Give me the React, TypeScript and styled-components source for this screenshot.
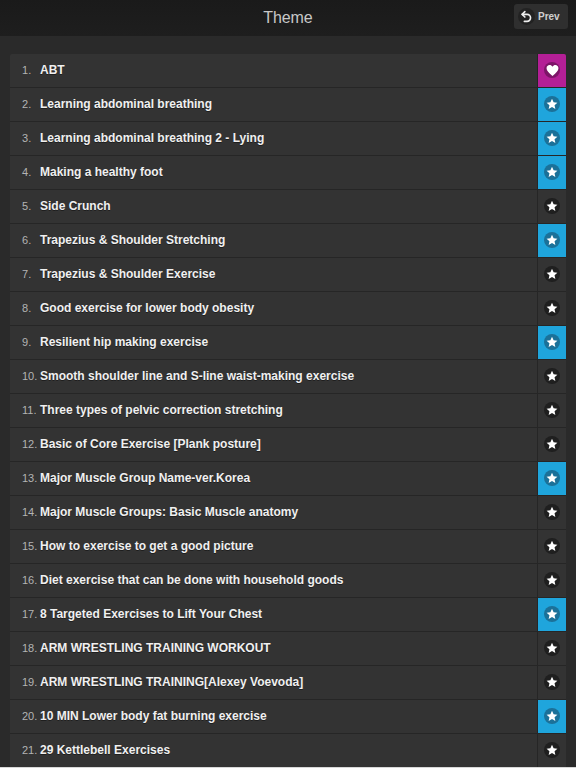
import styled, { createGlobalStyle } from 'styled-components'

const GlobalStyle = createGlobalStyle`
  html, body {
    margin: 0;
    padding: 0;
    height: 768px;
    overflow: hidden;
    background: #d8d8d8;
    font-family: "Liberation Sans", Arial, sans-serif;
  }
`

const Page = styled.div`
  width: 576px;
  height: 767px;
  overflow: hidden;
  display: flex;
  flex-direction: column;
  background: #2a2a2a;
`

const Header = styled.header`
  height: 36px;
  flex: none;
  display: flex;
  align-items: center;
  justify-content: space-between;
  padding: 0 8px 3px 10px;
  box-sizing: border-box;
  background: linear-gradient(#1a1a1a, #1e1e1e);
`

const Spacer = styled.div`
  width: 52px;
`

const Title = styled.h1`
  margin: 3px 0 0;
  font-size: 16px;
  font-weight: 400;
  letter-spacing: -0.1px;
  color: #c8c8c8;
`

const PrevButton = styled.button`
  width: 54px;
  height: 25px;
  padding: 0 0 0 4px;
  display: flex;
  align-items: center;
  gap: 3px;
  border: 0;
  border-radius: 3px;
  background: #2f2f2f;
  color: #cfcfcf;
  font: bold 10px "Liberation Sans", Arial, sans-serif;
`

const PrevIcon = styled.span`
  width: 17px;
  height: 17px;
  border-radius: 50%;
  background: #222;
  display: flex;
  align-items: center;
  justify-content: center;
`

const List = styled.ol`
  list-style: none;
  margin: 18px 10px 0;
  padding: 0;
  border-radius: 2px 2px 0 0;
  overflow: hidden;
  flex: none;
`

const Row = styled.li`
  height: 34px;
  box-sizing: border-box;
  display: flex;
  align-items: stretch;
  background: #333;
  border-bottom: 1px solid #262626;
`

const Num = styled.span`
  width: 30px;
  padding: 0 0 2px 12px;
  box-sizing: border-box;
  flex: none;
  display: flex;
  align-items: center;
  font-size: 11px;
  color: #b4b4b4;
`

const Name = styled.span`
  flex: 1;
  display: flex;
  align-items: center;
  padding-bottom: 2px;
  font-size: 12px;
  font-weight: 700;
  color: #f0f0f0;
  text-shadow: 0 1px 0 #1e1e1e;
`

const Cell = styled.span<{ $kind: 'heart' | 'on' | 'off' }>`
  width: 29px;
  flex: none;
  display: flex;
  align-items: center;
  justify-content: center;
  padding-bottom: 1px;
  border-left: 1px solid #262626;
  box-sizing: border-box;
  background: ${p => (p.$kind === 'heart' ? '#b41f96' : p.$kind === 'on' ? '#1fa5dc' : '#333')};
`

const Badge = styled.span<{ $kind: 'heart' | 'on' | 'off' }>`
  width: 16px;
  height: 16px;
  border-radius: 50%;
  display: flex;
  align-items: center;
  justify-content: center;
  background: ${p => (p.$kind === 'heart' ? '#7d1568' : p.$kind === 'on' ? '#1b7199' : '#1f1f1f')};
`

const items: [string, 'heart' | 'on' | 'off'][] = [
  ['ABT', 'heart'],
  ['Learning abdominal breathing', 'on'],
  ['Learning abdominal breathing 2 - Lying', 'on'],
  ['Making a healthy foot', 'on'],
  ['Side Crunch', 'off'],
  ['Trapezius & Shoulder Stretching', 'on'],
  ['Trapezius & Shoulder Exercise', 'off'],
  ['Good exercise for lower body obesity', 'off'],
  ['Resilient hip making exercise', 'on'],
  ['Smooth shoulder line and S-line waist-making exercise', 'off'],
  ['Three types of pelvic correction stretching', 'off'],
  ['Basic of Core Exercise [Plank posture]', 'off'],
  ['Major Muscle Group Name-ver.Korea', 'on'],
  ['Major Muscle Groups: Basic Muscle anatomy', 'off'],
  ['How to exercise to get a good picture', 'off'],
  ['Diet exercise that can be done with household goods', 'off'],
  ['8 Targeted Exercises to Lift Your Chest', 'on'],
  ['ARM WRESTLING TRAINING WORKOUT', 'off'],
  ['ARM WRESTLING TRAINING[Alexey Voevoda]', 'off'],
  ['10 MIN Lower body fat burning exercise', 'on'],
  ['29 Kettlebell Exercises', 'off'],
]

const Star = () => (
  <svg width="12" height="12" viewBox="0 0 24 24" fill="#fff">
    <path d="M12 1.5l3.2 7 7.6.8-5.7 5.1 1.6 7.5L12 18.1l-6.7 3.8 1.6-7.5L1.2 9.3l7.6-.8z" />
  </svg>
)

const Heart = () => (
  <svg width="13" height="13" viewBox="0 0 24 24" fill="#fff">
    <path d="M12 22C5 16 1 12.5 1 7.8 1 4.4 3.6 2 6.7 2c2.1 0 4.1 1.1 5.3 3 1.2-1.9 3.2-3 5.3-3C20.4 2 23 4.4 23 7.8c0 4.7-4 8.2-11 14.2z" />
  </svg>
)

export default function App() {
  return (
    <Page>
      <GlobalStyle />
      <Header>
        <Spacer />
        <Title>Theme</Title>
        <PrevButton>
          <PrevIcon>
            <svg width="13" height="13" viewBox="0 0 24 24" fill="none" stroke="#eee" strokeWidth="3" strokeLinecap="round" strokeLinejoin="round">
              <path d="M9 3L4 8l5 5" />
              <path d="M4 8h9a6 6 0 0 1 0 13H8" />
            </svg>
          </PrevIcon>
          Prev
        </PrevButton>
      </Header>
      <List>
        {items.map(([name, kind], i) => (
          <Row key={name}>
            <Num>{i + 1}.</Num>
            <Name>{name}</Name>
            <Cell $kind={kind}>
              <Badge $kind={kind}>{kind === 'heart' ? <Heart /> : <Star />}</Badge>
            </Cell>
          </Row>
        ))}
      </List>
    </Page>
  )
}
